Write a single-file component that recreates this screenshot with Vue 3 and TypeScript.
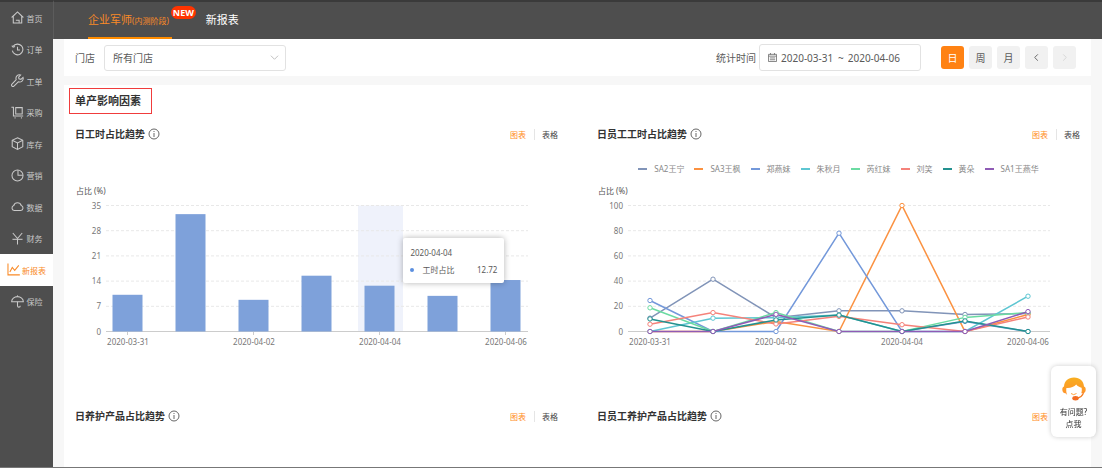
<script setup lang="ts">
interface NavItem { label: string; icon: string[]; active?: boolean }
interface Series { name: string; color: string; values: number[] }

const nav: NavItem[] = [
  { label: '首页', icon: ['M0.8 8 8 1.2 15.2 8', 'M2.8 6.5V14.8H13.2V6.5', 'M6 11.5H10V14.5'] },
  { label: '订单', icon: ['M2.6 4.2A6.6 6.6 0 1 1 1.6 9.5', 'M1 3.2 2.6 5.2 5 4.2', 'M8 4.5V8.5H11'] },
  { label: '工单', icon: ['M14.8 4.2 12.2 6.6 9.8 6 9.4 3.8 11.8 1.2A4.4 4.4 0 0 0 6.4 7L1.2 12.4A1.6 1.6 0 0 0 3.6 14.8L9 9.6A4.4 4.4 0 0 0 14.8 4.2Z'] },
  { label: '采购', icon: ['M0.5 1.5H3V12.3H15', 'M5.8 2H13.8V9.8H5.8Z', 'M4.4 14.6H5.6M12.2 14.6H13.4'] },
  { label: '库存', icon: ['M8 1 14.5 4V12L8 15.2 1.5 12V4Z', 'M1.5 4 8 7.2 14.5 4', 'M8 7.2V15'] },
  { label: '营销', icon: ['M8 1.2A6.8 6.8 0 1 0 14.8 8A6.8 6.8 0 0 0 8 1.2', 'M8.6 1.4V7.8H14.6'] },
  { label: '数据', icon: ['M4 13A3.2 3.2 0 0 1 3.4 6.8A4.8 4.8 0 0 1 12.6 6.8A3.2 3.2 0 0 1 12 13Z'] },
  { label: '财务', icon: ['M2.2 1.2 8 8 13.8 1.2', 'M8 8V15.4', 'M1.8 9H14.2'] },
  { label: '新报表', icon: ['M1.2 0.5V14.6H15.8', 'M3.5 11 6.5 5.5 9.5 9 14.5 3'], active: true },
  { label: '保险', icon: ['M0.8 8.4A7.2 6.4 0 0 1 15.2 8.4Z', 'M8 8.4V13.2A1.7 1.7 0 0 0 11.4 13.2', 'M8 2V0.5'] },
]

const days = ['2020-03-31', '2020-04-01', '2020-04-02', '2020-04-03', '2020-04-04', '2020-04-05', '2020-04-06']
const bars = [10.2, 32.6, 8.8, 15.5, 12.72, 9.9, 14.3]
const barTicks = [0, 7, 14, 21, 28, 35]
const lineTicks = [0, 20, 40, 60, 80, 100]
const series: Series[] = [
  { name: 'SA2王宁', color: '#8194b8', values: [10.6, 41.5, 11, 16.4, 16.4, 13.5, 14.2] },
  { name: 'SA3王枫', color: '#fb9140', values: [0, 0, 8, 0, 100, 0, 13.5] },
  { name: '郑燕妹', color: '#7398da', values: [24.6, 0, 0, 78, 0, 8, 0] },
  { name: '朱秋月', color: '#5ec6d2', values: [0, 10.6, 11, 13, 0, 0, 28] },
  { name: '芮红妹', color: '#6bdba2', values: [18.8, 0, 15, 0, 0, 11.2, 15] },
  { name: '刘笑', color: '#f5827a', values: [5.8, 15, 6, 12, 5.4, 0, 11.5] },
  { name: '黄朵', color: '#23918f', values: [10, 0, 9.2, 13, 0, 8.4, 0] },
  { name: 'SA1王燕华', color: '#8f5bb5', values: [0, 0, 13.6, 0, 0, 0, 15.8] },
]

const baseY = 149.5
const plotH = 126
const px = (i: number) => 53 + i * 63
const py = (v: number, max: number) => baseY - (v / max) * plotH
const points = (s: Series) => s.values.map((v, i) => `${px(i)},${py(v, 100)}`).join(' ')

const panels = [
  { title: '日工时占比趋势', kind: 'bar' },
  { title: '日员工工时占比趋势', kind: 'line' },
  { title: '日养护产品占比趋势', kind: '' },
  { title: '日员工养护产品占比趋势', kind: '' },
]
</script>

<template>
  <div class="app">
    <aside class="side">
      <nav class="menu" aria-label="主菜单">
        <a v-for="n in nav" :key="n.label" href="#" :class="['item', { active: n.active }]">
          <svg class="nav-icon" viewBox="0 0 16 16" aria-hidden="true"><path v-for="d in n.icon" :key="d" :d="d" /></svg>
          <span>{{ n.label }}</span>
        </a>
      </nav>
    </aside>

    <div class="main">
      <header class="top">
        <a href="#" class="tab current">企业军师<small>(内测阶段)</small><b class="new">NEW</b></a>
        <a href="#" class="tab">新报表</a>
      </header>

      <div class="content">
        <section class="filters">
          <label for="shop">门店</label>
          <span class="select">
            <select id="shop"><option>所有门店</option></select>
            <svg viewBox="0 0 10 10" aria-hidden="true"><path d="M1 3 5 7 9 3" /></svg>
          </span>
          <label for="from" class="time-label">统计时间</label>
          <span class="range">
            <svg viewBox="0 0 10 10" aria-hidden="true"><path d="M0.5 1.5H9.5V9.5H0.5ZM0.5 3.5H9.5M2.8 0V2M7.2 0V2M2 5.5H8M2 7.5H8" /></svg>
            <input id="from" value="2020-03-31" aria-label="统计时间 开始"><span>~</span><input value="2020-04-06" aria-label="统计时间 结束">
          </span>
          <span class="units">
            <button class="on">日</button><button>周</button><button>月</button>
            <button aria-label="上一页"><svg viewBox="0 0 10 10"><path d="M6.5 1.5 3 5 6.5 8.5" /></svg></button>
            <button aria-label="下一页" disabled><svg viewBox="0 0 10 10"><path d="M3.5 1.5 7 5 3.5 8.5" /></svg></button>
          </span>
        </section>

        <section class="report">
          <h2>单产影响因素</h2>
          <div class="grid">
            <article v-for="p in panels" :key="p.title" class="panel">
              <div class="head">
                <h3>{{ p.title }}</h3>
                <svg class="info" viewBox="0 0 12 12" aria-hidden="true"><circle cx="6" cy="6" r="5" /><path d="M6 5V9M6 3V4" /></svg>
                <button class="view sel">图表</button><button class="view">表格</button>
              </div>

              <template v-if="p.kind">
                <div class="legend">
                  <template v-if="p.kind === 'line'">
                    <span v-for="s in series" :key="s.name" class="key"><i :style="{ background: s.color }"></i>{{ s.name }}</span>
                  </template>
                </div>
                <div class="chart">
                  <svg viewBox="0 0 483 170" role="img" :aria-label="p.title">
                    <rect v-if="p.kind === 'bar'" x="283" y="23.5" width="45" height="126" class="hover" />
                    <text x="1" y="12" class="unit">占比 (%)</text>
                    <g v-for="(t, i) in p.kind === 'bar' ? barTicks : lineTicks" :key="t">
                      <line x1="31" x2="453" :y1="baseY - i * 25.2" :y2="baseY - i * 25.2" :class="i ? 'rule' : 'axis'" />
                      <text x="26" :y="baseY - i * 25.2 + 3" text-anchor="end">{{ t }}</text>
                    </g>
                    <template v-for="(d, i) in days" :key="d">
                      <line v-if="p.kind === 'bar' && i % 2 === 0" :x1="px(i) - 0.5" :x2="px(i) - 0.5" y1="150" y2="153" class="axis" />
                      <text v-if="i % 2 === 0" :x="px(i)" y="163" text-anchor="middle">{{ d }}</text>
                    </template>
                    <template v-if="p.kind === 'bar'">
                      <rect v-for="(v, i) in bars" :key="i" :x="px(i) - 15.5" :y="py(v, 35)" width="30" :height="baseY - py(v, 35)" class="bar" />
                    </template>
                    <template v-else>
                      <g v-for="s in series" :key="s.name" :stroke="s.color">
                        <polyline :points="points(s)" fill="none" stroke-width="1.5" />
                        <circle v-for="(v, i) in s.values" :key="i" :cx="px(i)" :cy="py(v, 100)" r="2.2" fill="#fff" />
                      </g>
                    </template>
                  </svg>
                  <div v-if="p.kind === 'bar'" class="tip">
                    <p>2020-04-04</p>
                    <p class="row"><i></i><span>工时占比</span><span class="val">12.72</span></p>
                  </div>
                </div>
              </template>
            </article>
          </div>
        </section>
      </div>
    </div>

    <button class="help">
      <svg viewBox="0 0 24 24" aria-hidden="true">
        <defs><linearGradient id="hair" x1="0" y1="0" x2="0" y2="1"><stop offset="0" stop-color="#f8ae20" /><stop offset="1" stop-color="#ff922c" /></linearGradient></defs>
        <path fill="url(#hair)" d="M12 0.5C6 0.5 2.4 4 2 9.5C0.7 10 0.3 11 0.3 12.5C0.3 15 1.6 16.3 3.5 16.2L5.2 18C4.3 16 4 13.5 4.4 11C8.5 11.3 12 10 14.2 7.5C15.6 9.2 17.6 10.3 19.6 10.7C20 13 19.8 14.7 19.3 16.3L21.2 15.9C23 15.8 23.7 14.3 23.7 12.4C23.7 10.9 23.2 10 22 9.5C21.6 4 18 0.5 12 0.5Z" />
        <path fill="none" stroke="#f57c1f" stroke-width="1.2" d="M21.5 15.5C20.8 18.6 18 20.8 14 21.3" />
        <path fill="none" stroke="#ff9a2c" stroke-width="0.9" d="M9 16.5Q11.5 18.8 14.5 16.5" />
        <ellipse cx="13.5" cy="21.2" rx="3.2" ry="2.2" fill="#f36b21" />
      </svg>
      <span>有问题?</span><span>点我</span>
    </button>
  </div>
</template>

<style>
body { overflow: hidden; }
</style>

<style scoped>
.app, .app * { box-sizing: border-box; }
.app {
  display: flex;
  height: 100vh;
  overflow: hidden;
  border-bottom: 1px solid #777;
  background: #f7f7f7;
  color: #5a5a5a;
  font: 10px/16px "Noto Sans", "Noto Sans CJK SC", sans-serif;
}
button, input, select { font: inherit; color: inherit; border: 0; padding: 0; margin: 0; background: none; }
a { color: inherit; text-decoration: none; }
h2, h3, p { margin: 0; }
svg { fill: none; stroke: currentColor; display: block; flex: none; }

.side { flex: none; width: 53px; background: #4e4e4e; border-top: 2px solid #3a3a3a; }
.menu { height: 315px; display: grid; grid-template-rows: repeat(10, 1fr); }
.item { display: flex; align-items: center; justify-content: center; gap: 3px; color: #c9c9c9; font-size: 8px; line-height: 12px; }
.item span { padding-top: 2px; white-space: nowrap; }
.nav-icon { width: 13px; height: 13px; stroke-width: 1.3; }
.item.active { background: #fff; color: #f98a27; gap: 2px; }

.main { flex: 1; min-width: 0; display: flex; flex-direction: column; }
.top { flex: none; height: 39px; background: #4e4e4e; border-top: 2px solid #3a3a3a; border-left: 1px solid #5c5c5c; padding-left: 34px; display: flex; gap: 34px; }
.tab { position: relative; color: #fff; font-size: 11px; line-height: 35px; white-space: nowrap; }
.tab small { font-size: 8px; }
.tab.current { color: #f98a27; border-bottom: 2px solid #ff8c00; padding-right: 3px; }
.new { position: absolute; left: 100%; top: 4px; height: 13px; margin-left: -1px; padding: 0 2px; border-radius: 7px; background: #ff3400; color: #fff; font-size: 9px; line-height: 13px; }

.content { flex: 1; min-height: 0; padding: 0 11px; display: flex; flex-direction: column; gap: 9px; }
.filters { flex: none; height: 37px; background: #fff; padding: 0 15px 0 11px; display: flex; align-items: center; }
.select { position: relative; width: 182px; height: 26px; margin-left: 9px; }
.select select { appearance: none; width: 100%; height: 100%; padding: 0 8px; border: 1px solid #e2e2e2; border-radius: 3px; }
.select svg { position: absolute; right: 7px; top: 8px; width: 9px; height: 9px; color: #bbb; pointer-events: none; }
.time-label { margin-left: auto; }
.range { width: 162px; height: 27px; margin-left: 3px; border: 1px solid #e2e2e2; border-radius: 3px; padding-left: 8px; display: flex; align-items: center; gap: 4px; }
.range svg { width: 9px; height: 9px; color: #777; }
.range input { width: 53px; }
.units { display: flex; gap: 5px; margin-left: 20px; }
.units button { width: 23px; height: 23px; border-radius: 3px; background: #f1f1f1; display: grid; place-items: center; }
.units .on { background: #ff8213; color: #fff; }
.units button:disabled { color: #d5d5d5; }
.units svg { width: 9px; height: 9px; }

.report { flex: 1; min-height: 0; overflow: hidden; background: #fff; padding: 3px 11px 0; }
h2 { width: max-content; margin-left: -6px; padding: 0 10px 0 5px; border: 1px solid #f03c3c; color: #333; font-size: 11px; line-height: 24px; }
.grid { display: grid; grid-template-columns: 1fr 1fr; column-gap: 39px; row-gap: 54px; margin-top: 10px; }
.panel { min-width: 0; }
.head { display: flex; align-items: center; height: 20px; }
h3 { color: #333; font-size: 10px; line-height: 20px; margin-right: 3px; }
.info { width: 12px; height: 12px; color: #666; margin-right: auto; }
.view { font-size: 8px; line-height: 11px; color: #444; }
.view.sel { color: #ff8c1a; padding-right: 8px; margin-right: 7px; border-right: 1px solid #e5e5e5; }

.legend { height: 38px; padding-top: 12px; display: flex; align-items: center; justify-content: center; gap: 10px; color: #888; font-size: 8px; line-height: 12px; }
.key { display: flex; align-items: center; gap: 7px; white-space: nowrap; }
.key i { width: 9px; height: 2px; }
.chart { position: relative; }
.chart > svg { width: 100%; height: auto; overflow: visible; }
.chart text { fill: #777; stroke: none; font-size: 8px; }
.chart .unit { fill: #555; }
.rule { stroke: #e8e8e8; stroke-dasharray: 3 2; }
.axis { stroke: #ccc; }
.bar { fill: #7ea1da; stroke: none; }
.hover { fill: #eff2fb; stroke: none; }
.tip { position: absolute; left: 68%; top: 33%; width: 101px; padding: 9px 7px 7px; background: #fff; border-radius: 2px; box-shadow: 0 0 6px rgba(0, 0, 0, 0.3); font-size: 8px; line-height: 12px; }
.tip .row { display: flex; align-items: center; margin-top: 5px; }
.tip i { width: 4px; height: 4px; border-radius: 50%; background: #5b8fdf; margin-right: 8px; }
.tip .val { margin-left: auto; }

.help { position: fixed; right: 6px; bottom: 31px; width: 45px; height: 71px; border-radius: 6px; background: #fff; box-shadow: 0 0 5px rgba(0, 0, 0, 0.2); display: flex; flex-direction: column; align-items: center; padding-top: 11px; font-size: 8px; line-height: 12px; color: #333; }
.help svg { width: 24px; height: 24px; margin-bottom: 5px; stroke: none; }
</style>
